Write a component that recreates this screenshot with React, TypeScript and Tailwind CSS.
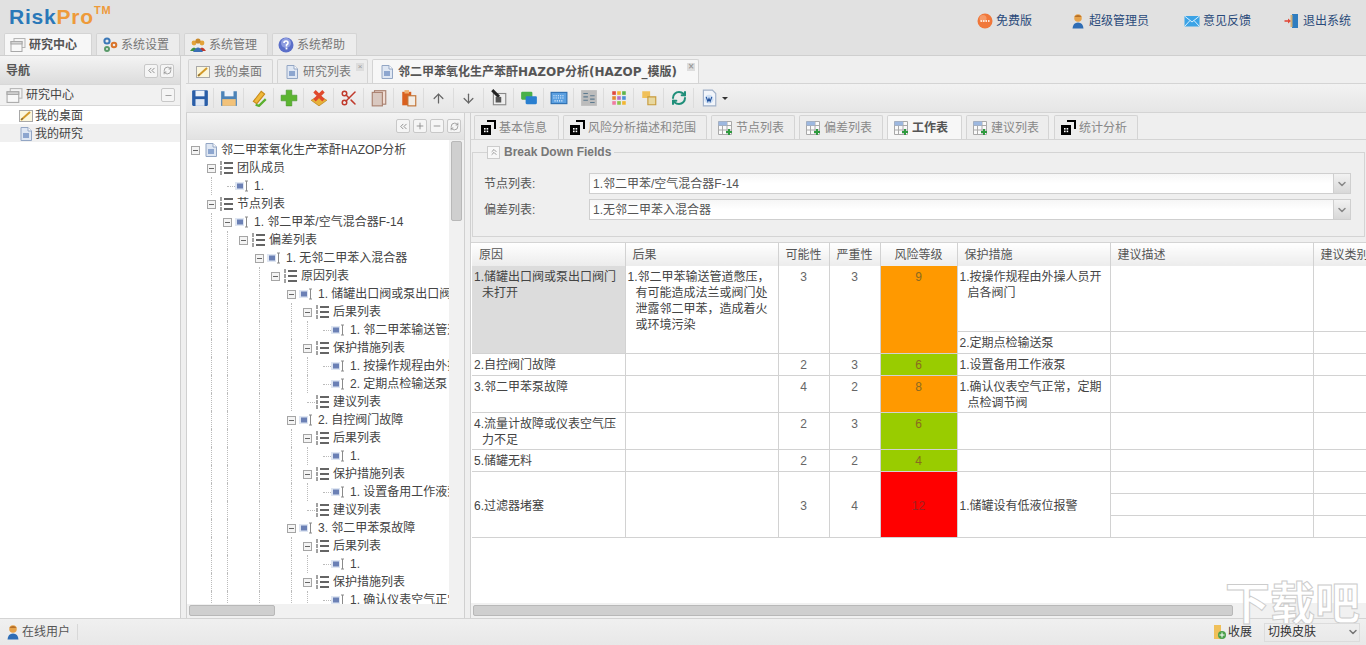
import type { ReactNode } from 'react'
import { ArrowDown, ArrowUp, ChevronDown, ChevronsLeft, ChevronsUp, Minus, Plus, RefreshCw, Scissors } from 'lucide-react'

/* ── small drawn icons ── */
function Svg({ size = 16, children }: { size?: number; children: ReactNode }) {
  return (
    <svg width={size} height={size} viewBox="0 0 16 16" className="shrink-0">
      {children}
    </svg>
  )
}

const WindowIcon = ({ size = 16 }: { size?: number }) => (
  <Svg size={size}>
    <rect x="4" y="1.5" width="11" height="9" fill="#f4f4f4" stroke="#b5b5b5" />
    <rect x="1" y="4.5" width="11" height="10" fill="#f8f8f8" stroke="#a8a8a8" />
    <rect x="1" y="4.5" width="11" height="2.5" fill="#d4d4d4" stroke="#a8a8a8" />
  </Svg>
)
const PencilPage = () => (
  <Svg>
    <rect x="1.5" y="2.5" width="13" height="11" fill="#fbf6dc" stroke="#a8a8a8" />
    <path d="M3 12 L12 4" stroke="#d29a2a" strokeWidth="2" />
    <path d="M3 12 L5 11 L4 10 Z" fill="#444" />
  </Svg>
)
const DocIcon = () => (
  <Svg>
    <path d="M3 1.5 H10 L13.5 5 V14.5 H3 Z" fill="#dfe7f3" stroke="#93a6c4" />
    <path d="M10 1.5 V5 H13.5" fill="#fff" stroke="#93a6c4" />
    <rect x="5" y="7" width="6" height="5" fill="#8da6cf" />
  </Svg>
)
const Gears = () => (
  <Svg>
    <circle cx="5" cy="4" r="2.6" fill="none" stroke="#3b78b8" strokeWidth="2" />
    <circle cx="5" cy="12" r="2" fill="none" stroke="#5a9a6a" strokeWidth="2" />
    <circle cx="12" cy="8" r="2.3" fill="none" stroke="#d9742b" strokeWidth="2" />
  </Svg>
)
const Users = () => (
  <Svg>
    <circle cx="4" cy="6" r="2.4" fill="#e3a33a" />
    <circle cx="12" cy="6" r="2.4" fill="#e3a33a" />
    <circle cx="8" cy="4" r="2.6" fill="#c98a2c" />
    <path d="M0 14 Q4 7 8 14 Z" fill="#3f8f3f" />
    <path d="M8 14 Q12 7 16 14 Z" fill="#c0392b" />
    <path d="M3 15 Q8 6 13 15 Z" fill="#3a6fb5" />
  </Svg>
)
const HelpIcon = () => (
  <svg width="16" height="16" viewBox="0 0 16 16" className="shrink-0">
    <circle cx="8" cy="8" r="7.5" fill="#5b6fc9" />
    <circle cx="8" cy="6" r="5" fill="#8e9de0" />
    <path d="M6 6 Q6 4 8 4 Q10 4 10 6 Q10 7 8.5 8 V9.5" fill="none" stroke="#fff" strokeWidth="1.6" />
    <rect x="7.6" y="10.6" width="1.8" height="1.8" fill="#fff" />
  </svg>
)
const Person = () => (
  <Svg>
    <path d="M2.5 15.5 Q3 9.5 8 9.5 Q13 9.5 13.5 15.5 Z" fill="#2f6db5" />
    <circle cx="8" cy="5" r="3.8" fill="#e6a24a" />
    <path d="M4.3 4 Q8 0 11.7 4 Z" fill="#b5702a" />
  </Svg>
)
const Mail = () => (
  <Svg>
    <rect x="0.5" y="3" width="15" height="10.5" fill="#3ba3e6" />
    <path d="M0.5 3 L8 9 L15.5 3 M0.5 13.5 L6 7.5 M15.5 13.5 L10 7.5" fill="none" stroke="#d9f0ff" />
  </Svg>
)
const ExitDoor = () => (
  <Svg>
    <rect x="8" y="1" width="6" height="14" fill="#2f7dc0" />
    <rect x="6.5" y="2" width="2" height="12" fill="#d3b27a" />
    <path d="M0.5 8 H5" stroke="#e04a3a" strokeWidth="1.6" />
    <path d="M4 5.5 L7 8 L4 10.5 Z" fill="#e04a3a" />
  </Svg>
)
const FreeBadge = () => (
  <Svg>
    <circle cx="8" cy="8" r="7.5" fill="#f0773a" />
    <circle cx="6" cy="5.5" r="3.5" fill="#f69a68" />
    <path d="M3.5 8 H12.5" stroke="#ffe3d2" strokeWidth="2" strokeDasharray="1.5 1" />
  </Svg>
)
const TabBlack = () => (
  <Svg>
    <path d="M7 1 H15 V9" fill="none" stroke="#000" strokeWidth="2" />
    <rect x="1" y="5" width="10" height="10" fill="#000" />
    <rect x="4" y="8" width="1.6" height="1.6" fill="#fff" />
    <rect x="6.6" y="8" width="1.6" height="1.6" fill="#fff" />
    <rect x="4" y="10.6" width="1.6" height="1.6" fill="#fff" />
    <rect x="6.6" y="10.6" width="1.6" height="1.6" fill="#fff" />
  </Svg>
)
const TabGrid = () => (
  <Svg>
    <path d="M1.5 1.5 H14.5 V14.5 H1.5 Z M1.5 5.5 H14.5 M1.5 10 H14.5 M5.5 1.5 V14.5 M10 1.5 V14.5" fill="#fafafa" stroke="#a9a9a9" />
    <rect x="1.5" y="1.5" width="8.5" height="4" fill="#9db8e0" />
    <path d="M9 12 H15 M12 9 V15" stroke="#2f9a3f" strokeWidth="2" />
  </Svg>
)
const ListIcon = () => (
  <svg width="14" height="16" viewBox="0 0 14 16" className="shrink-0">
    <path d="M1 2 H3 M1 4 H3 M1 7 H3 M1 9 H3 M1 12 H3 M1 14 H3" stroke="#444" strokeWidth="1" />
    <path d="M5 3 H14 M5 8 H14 M5 13 H14" stroke="#333" strokeWidth="1.5" />
  </svg>
)
const ItemIcon = () => (
  <svg width="14" height="12" viewBox="0 0 14 12" className="shrink-0">
    <rect x="0" y="2" width="9" height="8" fill="#dfe6f2" />
    <rect x="2" y="3.5" width="6" height="5" fill="#6b80b5" />
    <path d="M10 1 H13 M11.5 1 V11 M10 11 H13" stroke="#8a8a8a" />
  </svg>
)
const Toggle = () => (
  <span className="flex h-[9px] w-[9px] shrink-0 items-center justify-center border border-[#a5a5a5] bg-[#f4f4f4]">
    <span className="h-px w-[5px] bg-[#666]" />
  </span>
)

const Floppy = ({ color }: { color: string }) => (
  <svg width="18" height="18" viewBox="0 0 16 16">
    <path d="M1 2 Q1 1 2 1 H14 Q15 1 15 2 V14 Q15 15 14 15 H2 Q1 15 1 14 Z" fill={color} />
    <rect x="4" y="1.5" width="8" height="5" fill="#eef3fa" />
    <rect x="4" y="9" width="8" height="6" fill="#dfe7f3" />
  </svg>
)

const TOOLBAR: ReactNode[] = [
  <Floppy color="#2a5ea8" />,
  <svg width="18" height="18" viewBox="0 0 16 16">
    <path d="M1 2 H15 V15 H1 Z" fill="#4c83b8" />
    <rect x="4" y="1.5" width="8" height="5" fill="#eef3fa" />
    <rect x="2" y="9" width="12" height="6" fill="#f2c27a" />
  </svg>,
  <svg width="18" height="18" viewBox="0 0 16 16">
    <path d="M3 11 L10 2 L13 4.5 L6 13 Z" fill="#f0b93a" stroke="#c78a1a" />
    <path d="M5 14 L8 15 L14 9" fill="none" stroke="#5bb02f" strokeWidth="2" />
  </svg>,
  <svg width="18" height="18" viewBox="0 0 16 16">
    <path d="M5.5 1 H10.5 V5.5 H15 V10.5 H10.5 V15 H5.5 V10.5 H1 V5.5 H5.5 Z" fill="#5cb531" stroke="#3f8f22" strokeWidth="0.5" />
  </svg>,
  <svg width="18" height="18" viewBox="0 0 16 16">
    <path d="M1 10 L8 6 L15 10 L8 15 Z" fill="#e8b23a" stroke="#b7801c" strokeWidth="0.6" />
    <path d="M4 2 L12 10 M12 2 L4 10" stroke="#e0492c" strokeWidth="3" />
  </svg>,
  <Scissors size={18} color="#c0392b" />,
  <svg width="18" height="18" viewBox="0 0 16 16">
    <rect x="4" y="1.5" width="10" height="12" fill="#f0ddd4" stroke="#a8806f" />
    <rect x="2" y="3" width="9" height="12" fill="#d9c8c0" stroke="#a8806f" />
  </svg>,
  <svg width="18" height="18" viewBox="0 0 16 16">
    <rect x="2" y="2.5" width="8" height="12" fill="#d9601f" />
    <rect x="4" y="1" width="4" height="3" fill="#f0b070" />
    <rect x="7" y="6" width="7" height="9" fill="#f2ede6" stroke="#c07030" />
  </svg>,
  <ArrowUp size={15} color="#666" />,
  <ArrowDown size={15} color="#666" />,
  <svg width="18" height="18" viewBox="0 0 16 16">
    <rect x="3" y="4" width="11" height="10" fill="#eee" stroke="#888" />
    <path d="M2 1 L8 7" stroke="#222" strokeWidth="2.6" />
    <path d="M5 7 L10 7 L10 12 L5 12 Z" fill="#555" />
  </svg>,
  <svg width="18" height="18" viewBox="0 0 16 16">
    <rect x="1" y="2.5" width="10" height="7" rx="1" fill="#49b04a" />
    <rect x="5" y="6.5" width="10" height="7" rx="1" fill="#2a7fd0" />
  </svg>,
  <svg width="18" height="18" viewBox="0 0 16 16">
    <rect x="1" y="3" width="14" height="10" fill="#5a9fe0" stroke="#2c6eb0" />
    <path d="M3 6 H13 M3 8 H13 M4 10.5 H12" stroke="#e8f3ff" strokeWidth="1" strokeDasharray="1 1" />
  </svg>,
  <svg width="18" height="18" viewBox="0 0 16 16">
    <rect x="1" y="1" width="14" height="14" fill="#bcbcbc" />
    <path d="M3 4 H7 M3 7 H7 M3 10 H7 M9 6 H13 M9 9 H13 M9 12 H13" stroke="#5c7a8f" />
  </svg>,
  <svg width="18" height="18" viewBox="0 0 16 16">
    {['#e0483e', '#f2b632', '#5db44a', '#e58b2f', '#b66fc4', '#4b8fd8', '#f07aa0', '#8bc34a', '#f2b632'].map((c, i) => (
      <rect key={i} x={2 + (i % 3) * 4.4} y={2 + Math.floor(i / 3) * 4.4} width="3.2" height="3.2" fill={c} />
    ))}
  </svg>,
  <svg width="18" height="18" viewBox="0 0 16 16">
    <path d="M2 2 H9 V8 H2 Z" fill="#f0c05a" />
    <path d="M7 7 H14 V14 H7 Z" fill="#e8d8a0" stroke="#c79a3a" />
  </svg>,
  <RefreshCw size={16} color="#1f8f7a" strokeWidth={3} />,
  <svg width="18" height="18" viewBox="0 0 16 16">
    <path d="M3 1 H11 L14 4 V15 H3 Z" fill="#f2f5fa" stroke="#9fb0c8" />
    <circle cx="8" cy="9" r="4" fill="#cfe0f5" />
    <path d="M5.5 7 L7 11 L8 8.5 L9 11 L10.5 7" fill="none" stroke="#1f4f9a" />
  </svg>,
]

/* ── panel header buttons ── */
function MiniBtn({ children }: { children: ReactNode }) {
  return (
    <span className="flex h-[14px] w-[14px] items-center justify-center rounded-[2px] border border-[#c8c8c8] bg-[#f5f5f5] text-[#888]">
      {children}
    </span>
  )
}

/* ── tree ── */
type TreeRow = { d: number; t: string; kind: 'root' | 'list' | 'item'; open?: boolean }

const cause = (t: string): TreeRow => ({ d: 6, t, kind: 'item', open: true })
const list = (d: number, t: string, open = true): TreeRow => ({ d, t, kind: 'list', open })
const item = (d: number, t: string): TreeRow => ({ d, t, kind: 'item' })

const TREE: TreeRow[] = [
  { d: 0, t: '邻二甲苯氧化生产苯酐HAZOP分析', kind: 'root', open: true },
  list(1, '团队成员'),
  item(2, '1.'),
  list(1, '节点列表'),
  { d: 2, t: '1. 邻二甲苯/空气混合器F-14', kind: 'item', open: true },
  list(3, '偏差列表'),
  { d: 4, t: '1. 无邻二甲苯入混合器', kind: 'item', open: true },
  list(5, '原因列表'),
  cause('1. 储罐出口阀或泵出口阀门未打开'),
  list(7, '后果列表'),
  item(8, '1. 邻二甲苯输送管道憋压'),
  list(7, '保护措施列表'),
  item(8, '1. 按操作规程由外操人员开启各阀门'),
  item(8, '2. 定期点检输送泵'),
  list(7, '建议列表', false),
  cause('2. 自控阀门故障'),
  list(7, '后果列表'),
  item(8, '1.'),
  list(7, '保护措施列表'),
  item(8, '1. 设置备用工作液泵'),
  list(7, '建议列表', false),
  cause('3. 邻二甲苯泵故障'),
  list(7, '后果列表'),
  item(8, '1.'),
  list(7, '保护措施列表'),
  item(8, '1. 确认仪表空气正常，定期点检调节阀'),
]

const GUIDE_LEVELS = [1, 2, 4, 6, 7]

function TreeLine({ row }: { row: TreeRow }) {
  return (
    <div className="flex h-[18px] items-center whitespace-nowrap pl-2">
      {Array.from({ length: row.d }).map((_, l) => (
        <span
          key={l}
          className={
            GUIDE_LEVELS.includes(l) && (l !== 7 || row.d === 8)
              ? 'h-full w-4 shrink-0 border-l border-dotted border-[#bbb]'
              : 'h-full w-4 shrink-0'
          }
        />
      ))}
      <span className="-ml-1 flex w-[12px] shrink-0 items-center">
        {row.open ? <Toggle /> : <span className="ml-1 h-px w-2 border-t border-dotted border-[#bbb]" />}
      </span>
      {row.kind === 'root' && <DocIcon />}
      {row.kind === 'list' && <ListIcon />}
      {row.kind === 'item' && <ItemIcon />}
      <span className={row.kind === 'item' ? 'ml-[5px]' : row.kind === 'root' ? 'ml-[2px]' : 'ml-[4px]'}>{row.t}</span>
    </div>
  )
}

/* ── table ── */
const HEAD = [
  { t: '原因', w: 'w-[153px]', c: '' },
  { t: '后果', w: 'w-[153px]', c: '' },
  { t: '可能性', w: 'w-[51px]', c: 'text-center' },
  { t: '严重性', w: 'w-[51px]', c: 'text-center' },
  { t: '风险等级', w: 'w-[77px]', c: 'text-center' },
  { t: '保护措施', w: 'w-[153px]', c: '' },
  { t: '建议描述', w: 'w-[203px]', c: '' },
  { t: '建议类别', w: 'w-[120px]', c: '' },
]

const td = 'border-r border-b border-[#d2d2d2] align-top p-0'
const textCell = `${td} pt-[3px] pl-[10px] pr-1 -indent-[8px] leading-4`
const numCell = `${td} pt-[3px] text-center leading-4 text-[#666]`
const riskCell = 'border-r border-b border-[#d2d2d2] align-top pt-[3px] text-center leading-4 text-[#8a6a20]'

function RiskTable() {
  return (
    <table className="w-[961px] table-fixed border-collapse text-xs text-[#444]">
      <colgroup>
        {HEAD.map((h) => (
          <col key={h.t} className={h.w} />
        ))}
      </colgroup>
      <thead>
        <tr className="h-[23px]">
          {HEAD.map((h) => (
            <th
              key={h.t}
              className={`whitespace-nowrap border-r border-[#d2d2d2] bg-gradient-to-b from-white to-[#ececec] px-[7px] pt-[1px] font-normal text-[#555] ${h.c || 'text-left'}`}
            >
              {h.t}
            </th>
          ))}
        </tr>
      </thead>
      <tbody>
        <tr className="h-[65px]">
          <td rowSpan={2} className={`${textCell} bg-[#dcdcdc]`}>1.储罐出口阀或泵出口阀门未打开</td>
          <td rowSpan={2} className={textCell}>1.邻二甲苯输送管道憋压，有可能造成法兰或阀门处泄露邻二甲苯，造成着火或环境污染</td>
          <td rowSpan={2} className={numCell}>3</td>
          <td rowSpan={2} className={numCell}>3</td>
          <td rowSpan={2} className={`${riskCell} bg-[#ff9900]`}>9</td>
          <td className={textCell}>1.按操作规程由外操人员开启各阀门</td>
          <td className={td} />
          <td className={td} />
        </tr>
        <tr className="h-[22px]">
          <td className={textCell}>2.定期点检输送泵</td>
          <td className={td} />
          <td className={td} />
        </tr>
        <tr className="h-[22px]">
          <td className={textCell}>2.自控阀门故障</td>
          <td className={td} />
          <td className={numCell}>2</td>
          <td className={numCell}>3</td>
          <td className={`${riskCell} bg-[#99cc00]`}>6</td>
          <td className={textCell}>1.设置备用工作液泵</td>
          <td className={td} />
          <td className={td} />
        </tr>
        <tr className="h-[37px]">
          <td className={textCell}>3.邻二甲苯泵故障</td>
          <td className={td} />
          <td className={numCell}>4</td>
          <td className={numCell}>2</td>
          <td className={`${riskCell} bg-[#ff9900]`}>8</td>
          <td className={textCell}>1.确认仪表空气正常，定期点检调节阀</td>
          <td className={td} />
          <td className={td} />
        </tr>
        <tr className="h-[37px]">
          <td className={textCell}>4.流量计故障或仪表空气压力不足</td>
          <td className={td} />
          <td className={numCell}>2</td>
          <td className={numCell}>3</td>
          <td className={`${riskCell} bg-[#99cc00]`}>6</td>
          <td className={td} />
          <td className={td} />
          <td className={td} />
        </tr>
        <tr className="h-[22px]">
          <td className={textCell}>5.储罐无料</td>
          <td className={td} />
          <td className={numCell}>2</td>
          <td className={numCell}>2</td>
          <td className={`${riskCell} bg-[#99cc00]`}>4</td>
          <td className={td} />
          <td className={td} />
          <td className={td} />
        </tr>
        <tr className="h-[22px]">
          <td rowSpan={3} className={`${textCell} !align-middle`}>6.过滤器堵塞</td>
          <td rowSpan={3} className={td} />
          <td rowSpan={3} className={`${numCell} !align-middle`}>3</td>
          <td rowSpan={3} className={`${numCell} !align-middle`}>4</td>
          <td rowSpan={3} className={`${riskCell} !align-middle bg-[#ff0000] !text-[#a02020]`}>12</td>
          <td rowSpan={3} className={`${textCell} !align-middle`}>1.储罐设有低液位报警</td>
          <td className={td} />
          <td className={td} />
        </tr>
        <tr className="h-[22px]">
          <td className={td} />
          <td className={td} />
        </tr>
        <tr className="h-[22px]">
          <td className={td} />
          <td className={td} />
        </tr>
      </tbody>
    </table>
  )
}

/* ── tab bits ── */
function TopTab({ icon, label, active, w }: { icon: ReactNode; label: string; active?: boolean; w: string }) {
  return (
    <div
      className={`flex h-[22px] items-center gap-[3px] rounded-t-[2px] border border-b-0 border-[#d4d4d4] pl-[5px] pt-[1px] ${w} ${
        active ? 'bg-[#f7f7f7] font-bold text-[#555]' : 'bg-[#ececec] text-[#777]'
      }`}
    >
      {icon}
      <span>{label}</span>
    </div>
  )
}

function PageTab({ icon, label, active, closable, w }: { icon: ReactNode; label: string; active?: boolean; closable?: boolean; w: string }) {
  return (
    <div
      className={`relative flex h-[24px] items-center gap-[3px] rounded-t-[2px] border border-b-0 border-[#d4d4d4] pl-[6px] ${w} ${
        active ? "bg-[#f7f7f7] font-bold text-[#555] [font-family:'DejaVu_Sans','Noto_Sans_CJK_SC',sans-serif]" : 'bg-[#ededed] text-[#777]'
      }`}
    >
      {icon}
      <span className="whitespace-nowrap">{label}</span>
      {closable && (
        <span className="absolute right-[3px] top-[3px] flex h-[8px] w-[8px] items-center justify-center bg-[#ddd] text-[8px] leading-none text-[#999]">×</span>
      )}
    </div>
  )
}

const INNER_TABS = [
  { label: '基本信息', w: 'w-[85px]', mr: 'mr-[4px]', grid: false },
  { label: '风险分析描述和范围', w: 'w-[144px]', mr: 'mr-[4px]', grid: false },
  { label: '节点列表', w: 'w-[84px]', mr: 'mr-[4px]', grid: true },
  { label: '偏差列表', w: 'w-[84px]', mr: 'mr-[4px]', grid: true },
  { label: '工作表', w: 'w-[75px]', mr: 'mr-[4px]', grid: true, active: true },
  { label: '建议列表', w: 'w-[83px]', mr: 'mr-[5px]', grid: true },
  { label: '统计分析', w: 'w-[84px]', mr: '', grid: false },
]

function SelectField({ label, value }: { label: string; value: string }) {
  return (
    <div className="flex h-[21px] items-center">
      <span className="w-[116px] pl-[11px] pt-[1px] text-[#555]">{label}</span>
      <div className="flex h-[21px] w-[762px] items-stretch border border-[#cfcfcf] bg-gradient-to-b from-[#f6f6f6] via-white to-white">
        <span className="flex-1 pl-[3px] pt-[1px] leading-[19px] text-[#555]">{value}</span>
        <span className="flex w-[17px] items-center justify-center border-l border-[#cfcfcf] bg-gradient-to-b from-[#f2f2f2] to-[#d8d8d8]">
          <ChevronDown size={12} strokeWidth={3} color="#888" />
        </span>
      </div>
    </div>
  )
}

function ToolLink({ icon, label, w }: { icon: ReactNode; label: string; w: string }) {
  return (
    <div className={`flex items-center gap-[3px] text-[#2a4a7a] ${w}`}>
      {icon}
      <span>{label}</span>
    </div>
  )
}

export default function App() {
  return (
    <div className="relative flex h-[645px] w-[1366px] flex-col overflow-hidden bg-[#efefef] text-xs text-[#444] [font-family:'Liberation_Sans','Noto_Sans_CJK_SC',sans-serif]">
      {/* ── Header ── */}
      <header className="h-[56px] shrink-0 border-b border-[#cfcfcf] bg-[#e1e1e1]">
        <div className="flex h-[33px] items-start justify-between">
          <div className="ml-[9px] mt-[5px] flex items-start text-[21px] font-bold leading-[24px] tracking-[0.8px]">
            <span className="text-[#2a78b8]">Risk</span>
            <span className="text-[#ee9a3a]">Pro</span>
            <span className="-mt-[1px] text-[11px] leading-[12px] text-[#ee9a3a]">TM</span>
          </div>
          <div className="mt-[13px] flex">
            <ToolLink icon={<FreeBadge />} label="免费版" w="w-[93px]" />
            <ToolLink icon={<Person />} label="超级管理员" w="w-[114px]" />
            <ToolLink icon={<Mail />} label="意见反馈" w="w-[100px]" />
            <ToolLink icon={<ExitDoor />} label="退出系统" w="w-[82px]" />
          </div>
        </div>
        <div className="flex gap-[4px] pl-[4px]">
          <TopTab icon={<WindowIcon />} label="研究中心" active w="w-[88px]" />
          <TopTab icon={<Gears />} label="系统设置" w="w-[84px]" />
          <TopTab icon={<Users />} label="系统管理" w="w-[84px]" />
          <TopTab icon={<HelpIcon />} label="系统帮助" w="w-[85px]" />
        </div>
      </header>

      {/* ── Body ── */}
      <div className="flex min-h-0 flex-1">
        {/* Navigation */}
        <aside className="flex w-[181px] shrink-0 flex-col border-r border-[#cfcfcf] bg-white">
          <div className="flex h-[28px] items-center justify-between bg-gradient-to-b from-[#f4f4f4] to-[#dcdcdc] pl-[6px] pr-[6px] pt-[1px] font-bold text-[#555]">
            <span>导航</span>
            <span className="flex gap-[2px]">
              <MiniBtn><ChevronsLeft size={11} /></MiniBtn>
              <MiniBtn><RefreshCw size={9} /></MiniBtn>
            </span>
          </div>
          <div className="flex h-[22px] items-center justify-between border-y border-[#d8d8d8] bg-[#f1f1f1] pl-[6px] pr-[5px]">
            <span className="flex items-center gap-[3px]"><WindowIcon size={17} />研究中心</span>
            <MiniBtn><Minus size={9} /></MiniBtn>
          </div>
          <div className="flex h-[18px] items-center gap-[1px] pl-[18px] pt-[1px]"><PencilPage />我的桌面</div>
          <div className="flex h-[18px] items-center gap-[1px] bg-[#f0f0f0] pl-[18px] pt-[1px]"><DocIcon />我的研究</div>
        </aside>

        {/* Main */}
        <main className="ml-[5px] flex min-w-0 flex-1 flex-col">
          <div className="flex h-[28px] shrink-0 items-end gap-[4px] border-b border-[#d4d4d4] bg-[#efefef] pl-[2px]">
            <PageTab icon={<PencilPage />} label="我的桌面" w="w-[85px]" />
            <PageTab icon={<DocIcon />} label="研究列表" closable w="w-[91px]" />
            <PageTab icon={<DocIcon />} label="邻二甲苯氧化生产苯酐HAZOP分析(HAZOP_模版)" active closable w="w-[327px]" />
          </div>

          {/* Toolbar */}
          <div className="flex h-[29px] shrink-0 items-center border-b border-[#d4d4d4] bg-gradient-to-b from-[#f2f2f2] to-[#e6e6e6]">
            {TOOLBAR.map((icon, i) => (
              <span
                key={i}
                className={`flex h-[20px] items-center justify-center ${i === 0 ? 'w-[28px]' : 'w-[30px]'} ${i < TOOLBAR.length - 1 ? 'border-r border-[#dcdcdc]' : ''}`}
              >
                {icon}
              </span>
            ))}
            <span className="-ml-[2px] h-0 w-0 border-x-[3px] border-t-[3px] border-x-transparent border-t-[#333]" />
          </div>

          <div className="flex min-h-0 flex-1">
            {/* Tree panel */}
            <section className="flex w-[279px] shrink-0 flex-col border-x border-[#d0d0d0] bg-white">
              <div className="flex h-[27px] shrink-0 items-center justify-end gap-[3px] border-b border-[#e0e0e0] bg-gradient-to-b from-[#f4f4f4] to-[#e2e2e2] pr-[3px]">
                <MiniBtn><ChevronsLeft size={11} /></MiniBtn>
                <MiniBtn><Plus size={10} /></MiniBtn>
                <MiniBtn><Minus size={10} /></MiniBtn>
                <MiniBtn><RefreshCw size={9} /></MiniBtn>
              </div>
              <div className="flex min-h-0 flex-1">
                <div className="min-w-0 flex-1 overflow-hidden pt-[1px]">
                  {TREE.map((row, i) => (
                    <TreeLine key={i} row={row} />
                  ))}
                </div>
                <div className="w-[15px] shrink-0 bg-[#f1f1f1] px-[2px] pt-[1px]">
                  <div className="h-[80px] rounded-[2px] border border-[#b8b8b8] bg-[#cfcfcf]" />
                </div>
              </div>
              <div className="h-[14px] shrink-0 bg-[#f1f1f1] pl-[2px] pt-[1px]">
                <div className="h-[11px] w-[86px] rounded-[2px] border border-[#b8b8b8] bg-[#cfcfcf]" />
              </div>
            </section>

            {/* Work panel */}
            <section className="ml-[5px] flex min-w-0 flex-1 flex-col border-l border-[#d0d0d0]">
              <div className="flex h-[27px] shrink-0 items-end border-b border-[#d4d4d4] pl-[3px]">
                {INNER_TABS.map((t) => (
                  <div
                    key={t.label}
                    className={`flex h-[24px] items-center gap-[3px] rounded-t-[2px] border border-b-0 border-[#d4d4d4] pl-[5px] pt-[1px] ${t.w} ${t.mr} ${
                      t.active ? 'bg-[#f7f7f7] font-bold text-[#555]' : 'bg-[#ededed] text-[#888]'
                    }`}
                  >
                    {t.grid ? <TabGrid /> : <TabBlack />}
                    <span>{t.label}</span>
                  </div>
                ))}
              </div>

              {/* Break Down Fields */}
              <div className="relative mx-[1px] mt-[12px] h-[85px] shrink-0 border border-[#d4d4d4] bg-[#efefef]">
                <div className="absolute -top-[9px] left-[14px] flex items-center gap-[4px] bg-[#efefef] pr-[3px]">
                  <span className="flex h-[13px] w-[13px] items-center justify-center border border-[#ccc] bg-[#f8f8f8] text-[#888]">
                    <ChevronsUp size={10} />
                  </span>
                  <span className="font-bold text-[#777]">Break Down Fields</span>
                </div>
                <div className="flex flex-col gap-[5px] pt-[20px]">
                  <SelectField label="节点列表:" value="1.邻二甲苯/空气混合器F-14" />
                  <SelectField label="偏差列表:" value="1.无邻二甲苯入混合器" />
                </div>
              </div>

              {/* Worksheet */}
              <div className="mt-[5px] flex min-h-0 flex-1 flex-col border-t border-[#d4d4d4] bg-white">
                <div className="min-h-0 flex-1 overflow-hidden pl-[1px]">
                  <RiskTable />
                </div>
                <div className="h-[15px] shrink-0 bg-[#f1f1f1] pl-[2px] pt-[2px]">
                  <div className="h-[11px] w-[760px] rounded-[2px] border border-[#b8b8b8] bg-[#cfcfcf]" />
                </div>
              </div>
            </section>
          </div>
        </main>
      </div>

      {/* ── Status bar ── */}
      <footer className="flex h-[27px] shrink-0 items-center justify-between border-t border-[#d4d4d4] bg-gradient-to-b from-[#f0f0f0] to-[#e8e8e8] pl-[5px] pr-[6px]">
        <div className="flex items-center gap-[1px] border-r border-[#d8d8d8] pr-[7px] text-[#555]">
          <Person />
          <span>在线用户</span>
        </div>
        <div className="relative z-10 flex items-center text-[#333]">
          <span className="mr-[12px] flex items-center gap-[1px]">
            <svg width="16" height="16" viewBox="0 0 16 16" className="shrink-0">
              <rect x="3" y="1" width="7" height="14" fill="#f0c05a" />
              <circle cx="11" cy="11" r="4" fill="#4aa04a" />
              <path d="M8.5 11 H13.5 M11 8.5 V13.5" stroke="#fff" />
            </svg>
            收展
          </span>
          <div className="flex h-[19px] w-[96px] items-center justify-between border border-[#dcdcdc] pl-[3px]">
            <span>切换皮肤</span>
            <ChevronDown size={12} strokeWidth={3} color="#777" />
          </div>
        </div>
      </footer>

      {/* Watermark */}
      <div className="pointer-events-none absolute right-[6px] top-[582px] text-[45px] font-bold leading-[46px] text-white [-webkit-text-stroke:1px_#cccccc]">
        下载吧
      </div>
    </div>
  )
}
